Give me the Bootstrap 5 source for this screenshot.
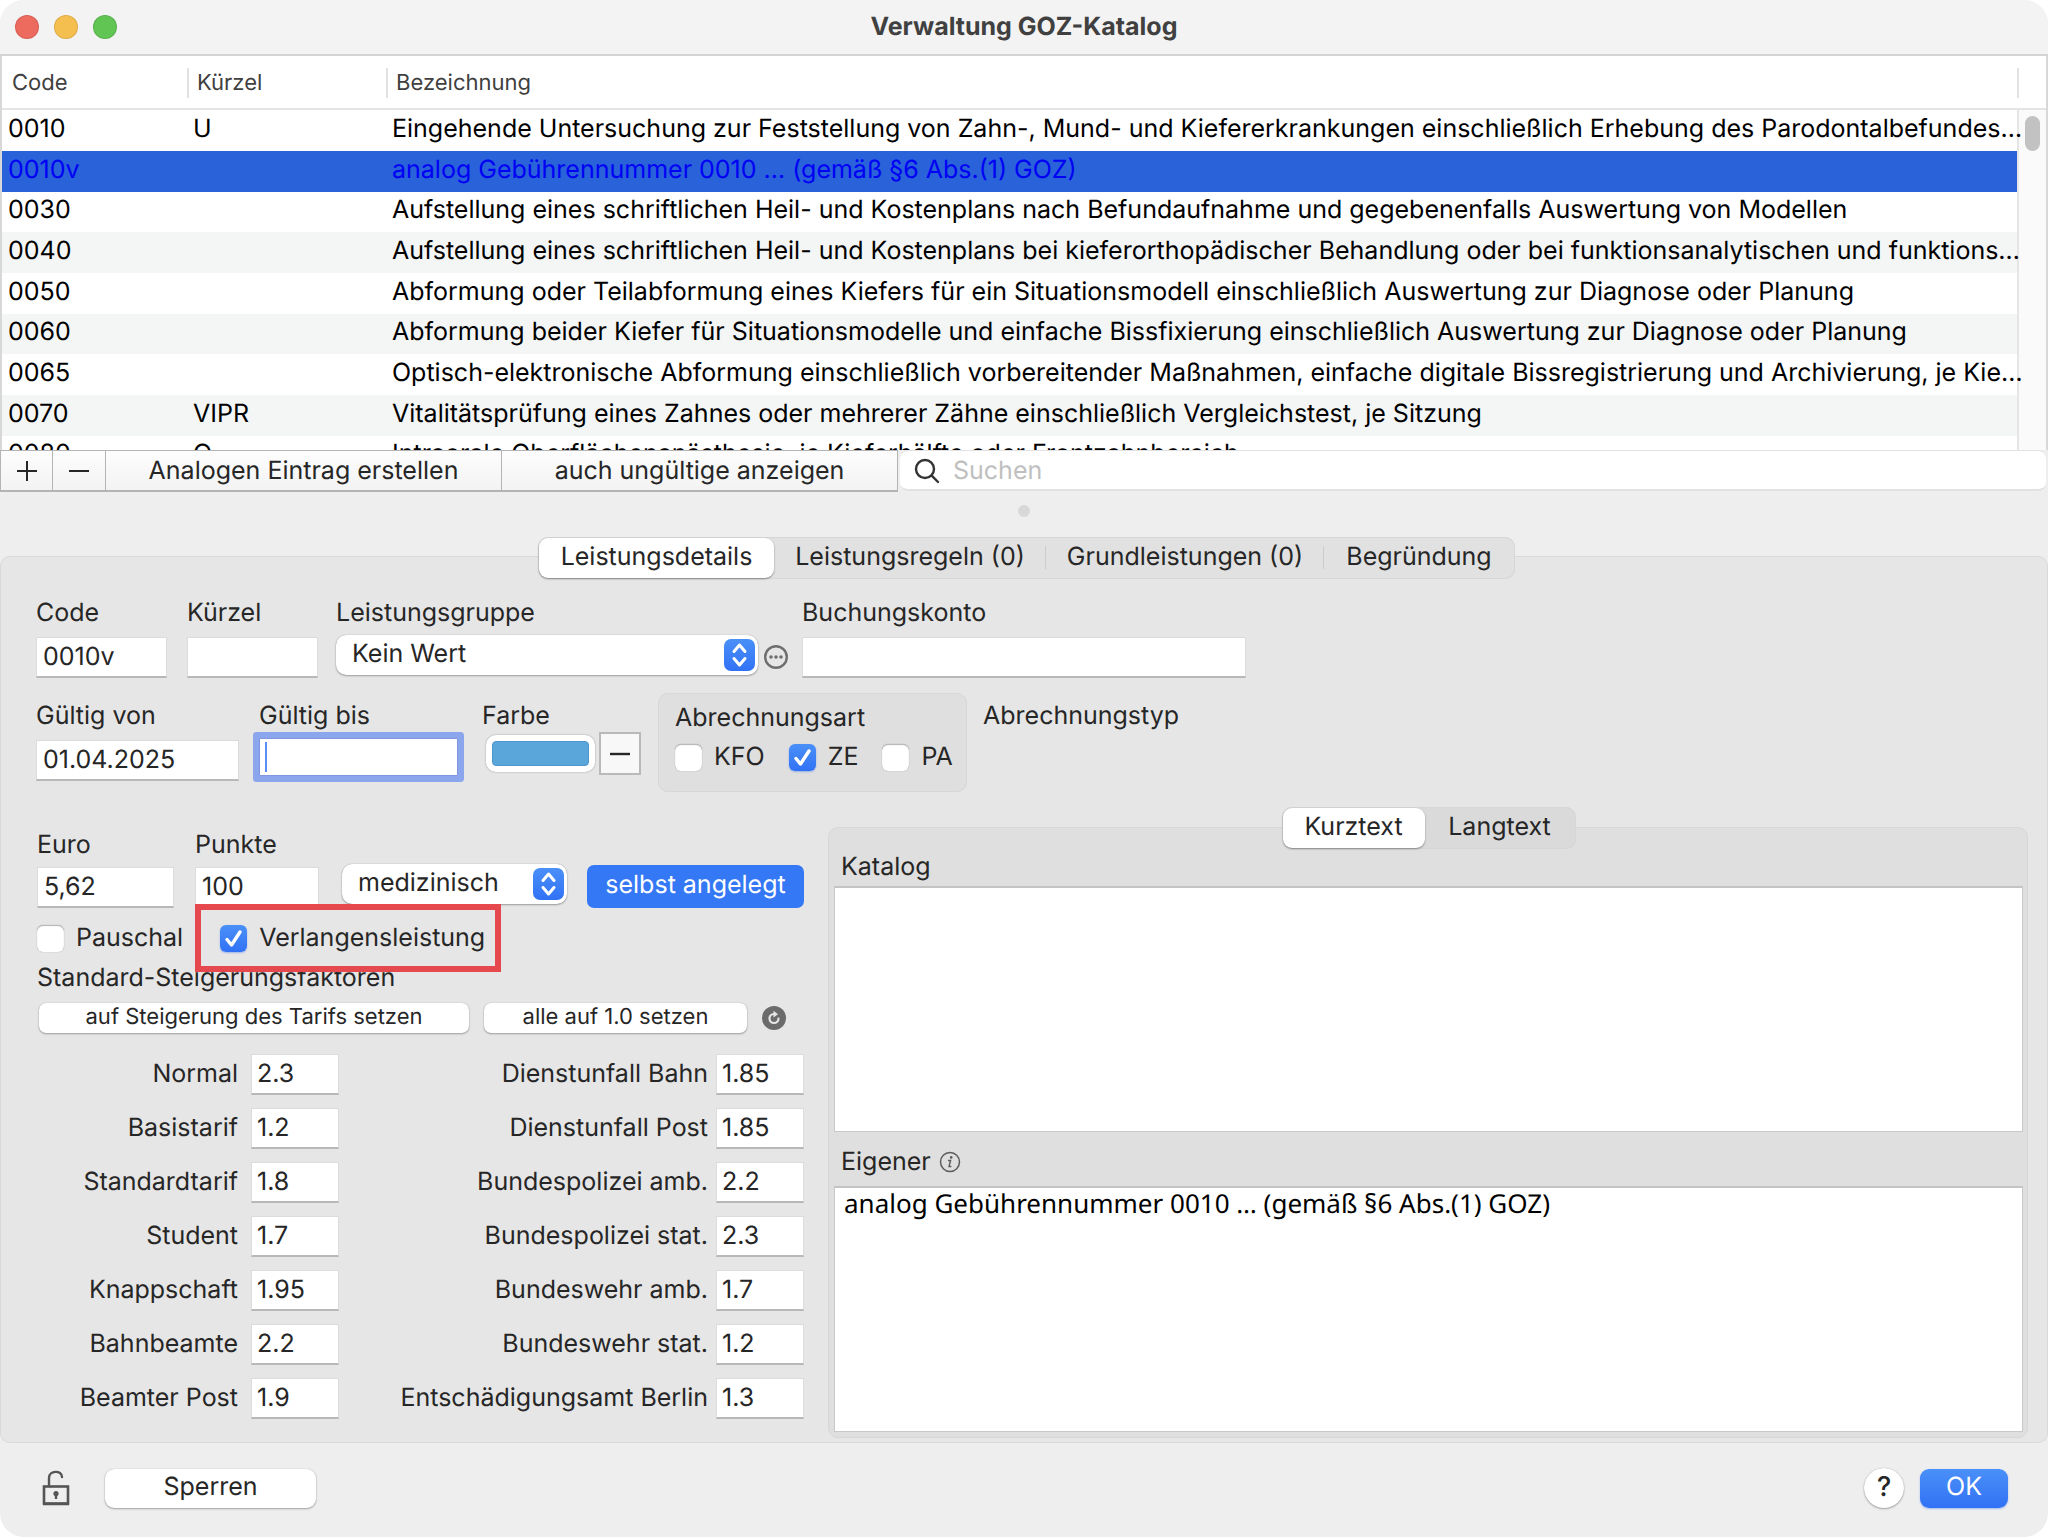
<!DOCTYPE html>
<html lang="de">
<head>
<meta charset="utf-8">
<meta name="viewport" content="width=device-width, initial-scale=1">
<title>Verwaltung GOZ-Katalog</title>
<link href="https://cdn.jsdelivr.net/npm/bootstrap@5.3.0/dist/css/bootstrap.min.css" rel="stylesheet">
<style>
  body { font-family: Inter, "Liberation Sans", sans-serif; text-rendering: geometricPrecision; font-size: 25px; line-height: 36px; color: #262626; background: #fff; }
  button, input, select, textarea { text-rendering: inherit; }
  .win { min-height: 100vh; background: #eee; border-radius: 24px; overflow: hidden; }
  .titlebar { height: 56px; background: #f3f3f3; border-bottom: 2px solid #d3d3d3; padding: 0 15px; }
  .titlebar h1 { font-size: 25px; font-weight: 700; color: #404040; line-height: 52px; padding-right: 102px; }
  .lights { gap: 15px; }
  .light { width: 24px; height: 24px; border-radius: 50%; border: 1px solid rgba(0,0,0,.1); }
  .light-r { background: #ec6a5e; } .light-y { background: #f5bf4f; } .light-g { background: #61c554; }

  /* catalogue list */
  .catalog { height: 394px; background: #fff; border: solid #d8d8d8; border-width: 0 2px; }
  .cat-table { table-layout: fixed; width: 100%; border-collapse: separate; border-spacing: 0; color: #000; }
  .cat-table th { height: 54px; font-size: 22px; font-weight: 400; color: #404040; padding: 2px 10px 0; border-bottom: 2px solid #e4e4e4; position: relative; }
  .cat-table th + th::before { content: ""; position: absolute; left: 0; top: 12px; height: 30px; width: 2px; background: #e2e2e2; }
  .cat-table td { height: 41px; line-height: 36px; padding: 0 0 4px 6px; white-space: nowrap; }
  .cat-table tr:nth-child(3n) td { height: 40px; }
  .cat-table tbody tr:nth-child(even) td { background: #f4f5f5; }
  .cat-table tbody tr.picked td { background: #2962d9; color: #0000f5; }
  .cat-table .c-code { width: 185px; } .cat-table .c-short { width: 199px; } .cat-table .c-bar { width: 29px; }
  .cat-table td.bar, .cat-table tbody tr:nth-child(even) td.bar, .cat-table tbody tr.picked td.bar { background: #fafafa; border-left: 2px solid #e6e6e6; }
  .thumb { width: 15px; height: 35px; border-radius: 8px; background: #c2c2c2; right: 6px; top: 60px; }

  /* button strip below the list */
  .strip-btn { height: 42px; border: solid #b4b4b4; border-width: 1px 1px 2px 0; background: linear-gradient(#fdfdfd, #f3f3f3); color: #262626; line-height: 36px; padding: 1px 0 0; }
  .strip-btn:first-child { border-left-width: 1px; }
  .w-sq { width: 53px; } .w-long { width: 396px; }
  .search { height: 41px; background: #fff; border-radius: 8px; border: solid #e2e2e2; border-width: 1px 0 2px; padding: 2px 0 0 13px; margin: 0 2px; gap: 12px; }
  .search input { border: 0; outline: 0; background: none; height: 36px; padding: 0; color: #262626; }
  .search input::placeholder { color: #bfbfbf; opacity: 1; }
  .splitter { height: 45px; padding-top: 13px; }
  .grip { width: 12px; height: 12px; border-radius: 50%; background: #d8d8d8; }

  /* segmented tabs */
  .seg { height: 42px; border-radius: 10px; background: #e1e1e1; box-shadow: inset 0 0 0 1px #d6d6d6; z-index: 1; padding: 1px; }
  .seg button { border: 0; background: none; color: inherit; height: 40px; line-height: 36px; padding: 0 0 2px; border-radius: 9px; }
  .seg button.on { background: #fff; box-shadow: 0 1px 2px rgba(0,0,0,.4); }
  .seg .bar-r { position: relative; }
  .seg .bar-r::after { content: ""; position: absolute; right: 0; top: 8px; height: 23px; width: 1px; background: #cbcbcb; }
  .w-t1 { width: 235px; } .w-t2 { width: 272px; } .w-t3 { width: 278px; } .w-t4 { width: 190px; } .w-t5 { width: 142px; } .w-t6 { width: 150px; }
  .seg-main { margin: 0 0 -23px 5px; }
  .seg-text { margin: -21px 0 -22px; background: #dadada; }

  .pane { background: #e6e6e6; border: 1px solid #d9d9d9; border-radius: 10px; padding: 38px 19px 6px 35px; height: 887px; }
  .box { background: #dfdfdf; border: 1px solid #d7d7d7; border-radius: 10px; }

  .fld { display: block; height: 41px; border: 1px solid #dcdcdc; border-bottom: 2px solid #b8b8b8; border-radius: 0; background: #fff; color: #262626; padding: 0 6px; width: 100%; outline: 0; }
  .cap { display: block; margin-bottom: 6px; white-space: nowrap; }
  .lower .cap { margin-bottom: 4px; }
  .f-131 { width: 131px; } .f-422 { width: 422px; } .f-444 { width: 444px; } .f-203 { width: 203px; } .f-137 { width: 137px; } .f-124 { width: 124px; } .f-88 { width: 88px; } .f-225 { width: 225px; }
  .gap-code { margin-right: 20px; } .gap-short { margin-right: 18px; }
  .focus-wrap { margin-top: -2px; }
  .active-fld { height: 38px; border: 1px solid #7e97e0; box-shadow: 0 0 0 6px #8ba6ec; border-radius: 1px; }
  .caret { width: 2px; height: 30px; background: #5b8df6; left: 6px; top: 4px; }
  .pick { position: relative; margin-top: -2px; }
  .pick select { appearance: none; width: 100%; height: 40px; border: 0; outline: 0; border-radius: 10px; background: #fff; color: #262626; padding: 0 50px 2px 16px; box-shadow: 0 0 1px rgba(0,0,0,.35), 0 1px 2px rgba(0,0,0,.3); line-height: 36px; }
  .pick svg { position: absolute; right: 3px; top: 4px; pointer-events: none; }

  .btn-mac { border: 0; border-radius: 9px; background: #fff; color: #262626; box-shadow: 0 0 1px rgba(0,0,0,.3), 0 1px 2px rgba(0,0,0,.3); padding: 0 0 2px; height: 39px; line-height: 36px; }
  .btn-sm-mac { height: 30px; line-height: 28px; font-size: 22px; border-radius: 7px; }
  .w-alle { width: 263px; margin: 0 15px; } .w-lock { width: 211px; margin-left: 34px; }
  .btn-tag { border: 0; background: #3478f6; color: #fff; border-radius: 7px; height: 43px; width: 217px; padding: 0 0 3px; margin-top: -2px; }
  .btn-ok { background: linear-gradient(#4a90f8, #3172f5); color: #fff; width: 88px; box-shadow: 0 1px 2px rgba(50,110,240,.4); }
  .btn-help { width: 40px; border-radius: 50%; height: 40px; font-weight: 500; font-size: 27px; }
  .tint { margin-top: -5px; }
  .swatch { width: 109px; height: 37px; padding: 6px; border: 0; border-radius: 10px; background: #fff; box-shadow: 0 0 2px rgba(0,0,0,.35); }
  .swatch::-webkit-color-swatch-wrapper { padding: 0; }
  .swatch::-webkit-color-swatch { border: 1px solid #4f97cb; border-radius: 4px; }
  .btn-minus { width: 42px; height: 43px; border: 2px solid #b9b9b9; background: #f8f8f8; padding: 0; margin: -3px 0 0 4px; }

  .tick { display: flex; align-items: center; gap: 12px; white-space: nowrap; }
  .tick input { appearance: none; flex: none; width: 27px; height: 27px; margin: 0; border-radius: 6px; background: #fff; box-shadow: inset 0 1px 1px rgba(0,0,0,.3), 0 0 1px rgba(0,0,0,.35); }
  .tick input:checked { box-shadow: 0 1px 2px rgba(50,110,240,.4); background: url("data:image/svg+xml,%3Csvg xmlns='http://www.w3.org/2000/svg' viewBox='0 0 27 27'%3E%3Cpath d='M7 14.5l4.5 5.5L20 7' fill='none' stroke='%23fff' stroke-width='3.4' stroke-linecap='round' stroke-linejoin='round'/%3E%3C/svg%3E"), linear-gradient(#4a90f8, #3172f5); }
  .art { width: 309px; height: 99px; padding: 6px 16px; margin: -1px 0 0 17px; }
  .art .ticks { gap: 24px; margin-top: 3px; }
  .marked { border: 6px solid #e5484d; width: 306px; height: 68px; margin: 0 0 0 12px; padding-left: 19px; position: relative; z-index: 1; }
  .opts { margin: -4px 0 -12px; }

  .lower { margin-top: 35px; }
  .left { width: 767px; margin: 0 24px 0 1px; }
  .punkte { margin: 0 23px 0 21px; }
  .setters { margin-top: 7px; padding: 0 18px 0 2px; }
  .factor { height: 40px; }
  .factors-a { width: 302px; } .factors-b { width: 450px; }
  .factors-a, .factors-b { gap: 14px; }
  .factors-a .factor { gap: 13px; } .factors-b .factor { gap: 8px; }
  .factor .fld { padding: 0 5px; }
  .factors { margin-top: 21px; }
  .texts { height: 611px; padding: 0 4px 5px 5px; }
  .note { flex: 1 1 0; resize: none; border: 1px solid #c8c8c8; border-top: 2px solid #c4c4c4; background: #fff; color: #000; padding: 0 9px; outline: 0; font-family: "Noto Sans", "Open Sans", sans-serif; font-size: 26px; line-height: 31px; width: 100%; display: block; }
  .note-cap { line-height: 38px; padding-left: 7px; }
  .cap-a { padding-top: 21px; } .cap-b { padding: 11px 0 5px 7px; }
  .footbar { padding: 25px 40px 28px 41px; }
</style>
</head>
<body>
<div class="win d-flex flex-column">
  <header class="titlebar d-flex align-items-center">
    <div class="lights d-flex"><span class="light light-r"></span><span class="light light-y"></span><span class="light light-g"></span></div>
    <h1 class="flex-grow-1 text-center m-0">Verwaltung GOZ-Katalog</h1>
  </header>

  <section class="catalog overflow-hidden position-relative">
    <table class="cat-table">
      <colgroup><col class="c-code"><col class="c-short"><col><col class="c-bar"></colgroup>
      <thead><tr><th>Code</th><th>Kürzel</th><th>Bezeichnung</th><th></th></tr></thead>
      <tbody>
        <tr><td>0010</td><td>U</td><td>Eingehende Untersuchung zur Feststellung von Zahn-, Mund- und Kiefererkrankungen einschließlich Erhebung des Parodontalbefundes…</td><td class="bar"></td></tr>
        <tr class="picked"><td>0010v</td><td></td><td>analog Gebührennummer 0010 … (gemäß §6 Abs.(1) GOZ)</td><td class="bar"></td></tr>
        <tr><td>0030</td><td></td><td>Aufstellung eines schriftlichen Heil- und Kostenplans nach Befundaufnahme und gegebenenfalls Auswertung von Modellen</td><td class="bar"></td></tr>
        <tr><td>0040</td><td></td><td>Aufstellung eines schriftlichen Heil- und Kostenplans bei kieferorthopädischer Behandlung oder bei funktionsanalytischen und funktions…</td><td class="bar"></td></tr>
        <tr><td>0050</td><td></td><td>Abformung oder Teilabformung eines Kiefers für ein Situationsmodell einschließlich Auswertung zur Diagnose oder Planung</td><td class="bar"></td></tr>
        <tr><td>0060</td><td></td><td>Abformung beider Kiefer für Situationsmodelle und einfache Bissfixierung einschließlich Auswertung zur Diagnose oder Planung</td><td class="bar"></td></tr>
        <tr><td>0065</td><td></td><td>Optisch-elektronische Abformung einschließlich vorbereitender Maßnahmen, einfache digitale Bissregistrierung und Archivierung, je Kie…</td><td class="bar"></td></tr>
        <tr><td>0070</td><td>VIPR</td><td>Vitalitätsprüfung eines Zahnes oder mehrerer Zähne einschließlich Vergleichstest, je Sitzung</td><td class="bar"></td></tr>
        <tr><td>0080</td><td>O</td><td>Intraorale Oberflächenanästhesie, je Kieferhälfte oder Frontzahnbereich</td><td class="bar"></td></tr>
      </tbody>
    </table>
    <span class="thumb position-absolute"></span>
  </section>

  <div class="d-flex">
    <button class="strip-btn w-sq" type="button" aria-label="Hinzufügen"><svg width="22" height="22" viewBox="0 0 22 22" stroke="#262626" stroke-width="2" class="d-block mx-auto"><path d="M11 1v20M1 11h20"/></svg></button>
    <button class="strip-btn w-sq" type="button" aria-label="Entfernen"><svg width="22" height="22" viewBox="0 0 22 22" stroke="#262626" stroke-width="2" class="d-block mx-auto"><path d="M1 11h20"/></svg></button>
    <button class="strip-btn w-long" type="button">Analogen Eintrag erstellen</button>
    <button class="strip-btn w-long" type="button">auch ungültige anzeigen</button>
    <div class="search d-flex align-items-center flex-grow-1">
      <svg width="28" height="28" viewBox="0 0 28 28" fill="none" stroke="#333" stroke-width="2.4" stroke-linecap="round"><circle cx="12" cy="12" r="9"/><path d="M18.700 18.700L25 25"/></svg>
      <input class="flex-grow-1" type="search" placeholder="Suchen" aria-label="Suchen">
    </div>
  </div>
  <div class="splitter"><div class="grip mx-auto"></div></div>

  <nav class="seg seg-main d-flex align-self-center position-relative">
    <button class="on w-t1" type="button">Leistungsdetails</button>
    <button class="bar-r w-t2" type="button">Leistungsregeln (0)</button>
    <button class="bar-r w-t3" type="button">Grundleistungen (0)</button>
    <button class="w-t4" type="button">Begründung</button>
  </nav>

  <main class="pane">
    <div class="d-flex">
      <div class="f-131 gap-code"><label class="cap" for="code">Code</label><input class="fld" id="code" value="0010v"></div>
      <div class="f-131 gap-short"><label class="cap" for="kz">Kürzel</label><input class="fld" id="kz"></div>
      <div class="f-422"><label class="cap" for="grp">Leistungsgruppe</label>
        <div class="pick"><select id="grp"><option>Kein Wert</option></select>
          <svg width="31" height="32" viewBox="0 0 31 32"><defs><linearGradient id="bl" x1="0" y1="0" x2="0" y2="1"><stop stop-color="#4a90f8"/><stop offset="1" stop-color="#3172f5"/></linearGradient></defs><rect width="31" height="32" rx="7" fill="url(#bl)"/><path d="M10 12.500l5.500-6.500 5.500 6.500M10 19.500l5.500 6.500 5.500-6.500" fill="none" stroke="#fff" stroke-width="3" stroke-linecap="round" stroke-linejoin="round"/></svg></div></div>
      <button class="border-0 bg-transparent p-0 align-self-end d-flex mb-2 ms-1 me-2" type="button" aria-label="Mehr"><svg width="28" height="26" viewBox="0 0 28 26"><circle cx="14" cy="13" r="10.800" fill="none" stroke="#6e6e6e" stroke-width="2.400"/><g fill="#6e6e6e"><circle cx="9" cy="13" r="1.800"/><circle cx="14" cy="13" r="1.800"/><circle cx="19" cy="13" r="1.800"/></g></svg></button>
      <div class="f-444 ms-1"><label class="cap" for="bk">Buchungskonto</label><input class="fld" id="bk"></div>
    </div>

    <div class="d-flex mt-3">
      <div class="f-203 pt-1"><label class="cap" for="von">Gültig von</label><input class="fld" id="von" value="01.04.2025"></div>
      <div class="f-203 ms-3 ps-1 pt-1"><label class="cap" for="bis">Gültig bis</label><div class="focus-wrap position-relative"><input class="fld active-fld" id="bis"><span class="caret position-absolute"></span></div></div>
      <div class="ms-4 pt-1"><label class="cap" for="farbe">Farbe</label>
        <div class="tint d-flex ps-1"><input type="color" class="swatch" id="farbe" value="#5aa5da"><button class="btn-minus" type="button" aria-label="Farbe entfernen"><svg class="d-block mx-auto" width="20" height="20" viewBox="0 0 20 20"><path d="M0 10h20" stroke="#262626" stroke-width="2.400"/></svg></button></div></div>
      <fieldset class="box art"><span class="cap mb-0">Abrechnungsart</span>
        <div class="ticks d-flex"><label class="tick"><input type="checkbox">KFO</label><label class="tick"><input type="checkbox" checked>ZE</label><label class="tick"><input type="checkbox">PA</label></div></fieldset>
      <div class="ms-3 pt-1">Abrechnungstyp</div>
    </div>

    <div class="lower d-flex">
      <section class="left">
        <div class="d-flex">
          <div class="f-137"><label class="cap" for="eur">Euro</label><input class="fld" id="eur" value="5,62"></div>
          <div class="f-124 punkte"><label class="cap" for="pkt">Punkte</label><input class="fld" id="pkt" value="100"></div>
          <div class="f-225 align-self-end pb-1"><div class="pick"><select aria-label="Art"><option>medizinisch</option></select>
            <svg width="31" height="32" viewBox="0 0 31 32"><rect width="31" height="32" rx="7" fill="url(#bl)"/><path d="M10 12.500l5.500-6.500 5.500 6.500M10 19.500l5.500 6.500 5.500-6.500" fill="none" stroke="#fff" stroke-width="3" stroke-linecap="round" stroke-linejoin="round"/></svg></div></div>
          <button class="btn-tag align-self-end ms-auto" type="button">selbst angelegt</button>
        </div>
        <div class="opts d-flex">
          <label class="tick"><input type="checkbox">Pauschal</label>
          <label class="tick marked"><input type="checkbox" checked>Verlangensleistung</label>
        </div>
        <div>Standard-Steigerungsfaktoren</div>
        <div class="setters d-flex align-items-center">
          <button class="btn-mac btn-sm-mac flex-grow-1" type="button">auf Steigerung des Tarifs setzen</button>
          <button class="btn-mac btn-sm-mac w-alle" type="button">alle auf 1.0 setzen</button>
          <button class="border-0 bg-transparent p-0 d-flex" type="button" aria-label="Zurücksetzen"><svg width="24" height="24" viewBox="0 0 24 24"><circle cx="12" cy="12" r="12" fill="#6b6b6b"/><path d="M16.500 12.500a4.500 4.500 0 1 1-4.500-4.500" fill="none" stroke="#e6e6e6" stroke-width="2.200" stroke-linecap="round"/><path d="M11.500 4.800l4.500 3.400-4.500 3.400z" fill="#e6e6e6"/></svg></button>
        </div>
        <div class="factors d-flex justify-content-between">
          <div class="factors-a d-flex flex-column" id="fa"></div>
          <div class="factors-b d-flex flex-column" id="fb"></div>
        </div>
      </section>

      <section class="box texts flex-grow-1 d-flex flex-column">
        <nav class="seg seg-text d-flex align-self-center position-relative"><button class="on w-t5" type="button">Kurztext</button><button class="w-t6" type="button">Langtext</button></nav>
        <label class="note-cap cap-a" for="kat">Katalog</label>
        <textarea class="note" id="kat"></textarea>
        <div class="note-cap cap-b d-flex align-items-center"><label for="eig">Eigener</label>
          <svg class="ms-2" width="22" height="22" viewBox="0 0 22 22"><circle cx="11" cy="11" r="9.500" fill="none" stroke="#5c5c5c" stroke-width="1.500"/><circle cx="12.200" cy="6.400" r="1.300" fill="#5c5c5c"/><path d="M9 9.500h2.600L10 15.500h2.400" fill="none" stroke="#5c5c5c" stroke-width="1.400"/></svg></div>
        <textarea class="note" id="eig">analog Gebührennummer 0010 … (gemäß §6 Abs.(1) GOZ)</textarea>
      </section>
    </div>
  </main>

  <footer class="footbar d-flex align-items-center">
    <svg width="30" height="38" viewBox="0 0 30 38" fill="none" stroke="#555"><rect x="3" y="17.500" width="24" height="17" stroke-width="2.600"/><path d="M8 17V9c0-8 13-8 13-1" stroke-width="2.400" stroke-linecap="round"/><path d="M2 35h26" stroke-width="2.400"/><circle cx="15" cy="24.500" r="2.600" fill="#555" stroke="none"/><path d="M15 25v5" stroke-width="2.400"/></svg>
    <button class="btn-mac w-lock" type="button">Sperren</button>
    <button class="btn-mac btn-help ms-auto me-3" type="button">?</button>
    <button class="btn-mac btn-ok" type="button">OK</button>
  </footer>
</div>
<script src="https://cdn.jsdelivr.net/npm/bootstrap@5.3.0/dist/js/bootstrap.bundle.min.js"></script>
<script>
  const factors = {
    fa: [["Normal","2.3"],["Basistarif","1.2"],["Standardtarif","1.8"],["Student","1.7"],["Knappschaft","1.95"],["Bahnbeamte","2.2"],["Beamter Post","1.9"]],
    fb: [["Dienstunfall Bahn","1.85"],["Dienstunfall Post","1.85"],["Bundespolizei amb.","2.2"],["Bundespolizei stat.","2.3"],["Bundeswehr amb.","1.7"],["Bundeswehr stat.","1.2"],["Entschädigungsamt Berlin","1.3"]]
  };
  for (const [col, rows] of Object.entries(factors))
    document.getElementById(col).innerHTML = rows.map(([name, value], i) =>
      `<div class="factor d-flex align-items-center justify-content-end"><label for="${col}${i}">${name}</label><div class="f-88"><input class="fld" id="${col}${i}" value="${value}"></div></div>`).join("");
</script>
</body>
</html>
